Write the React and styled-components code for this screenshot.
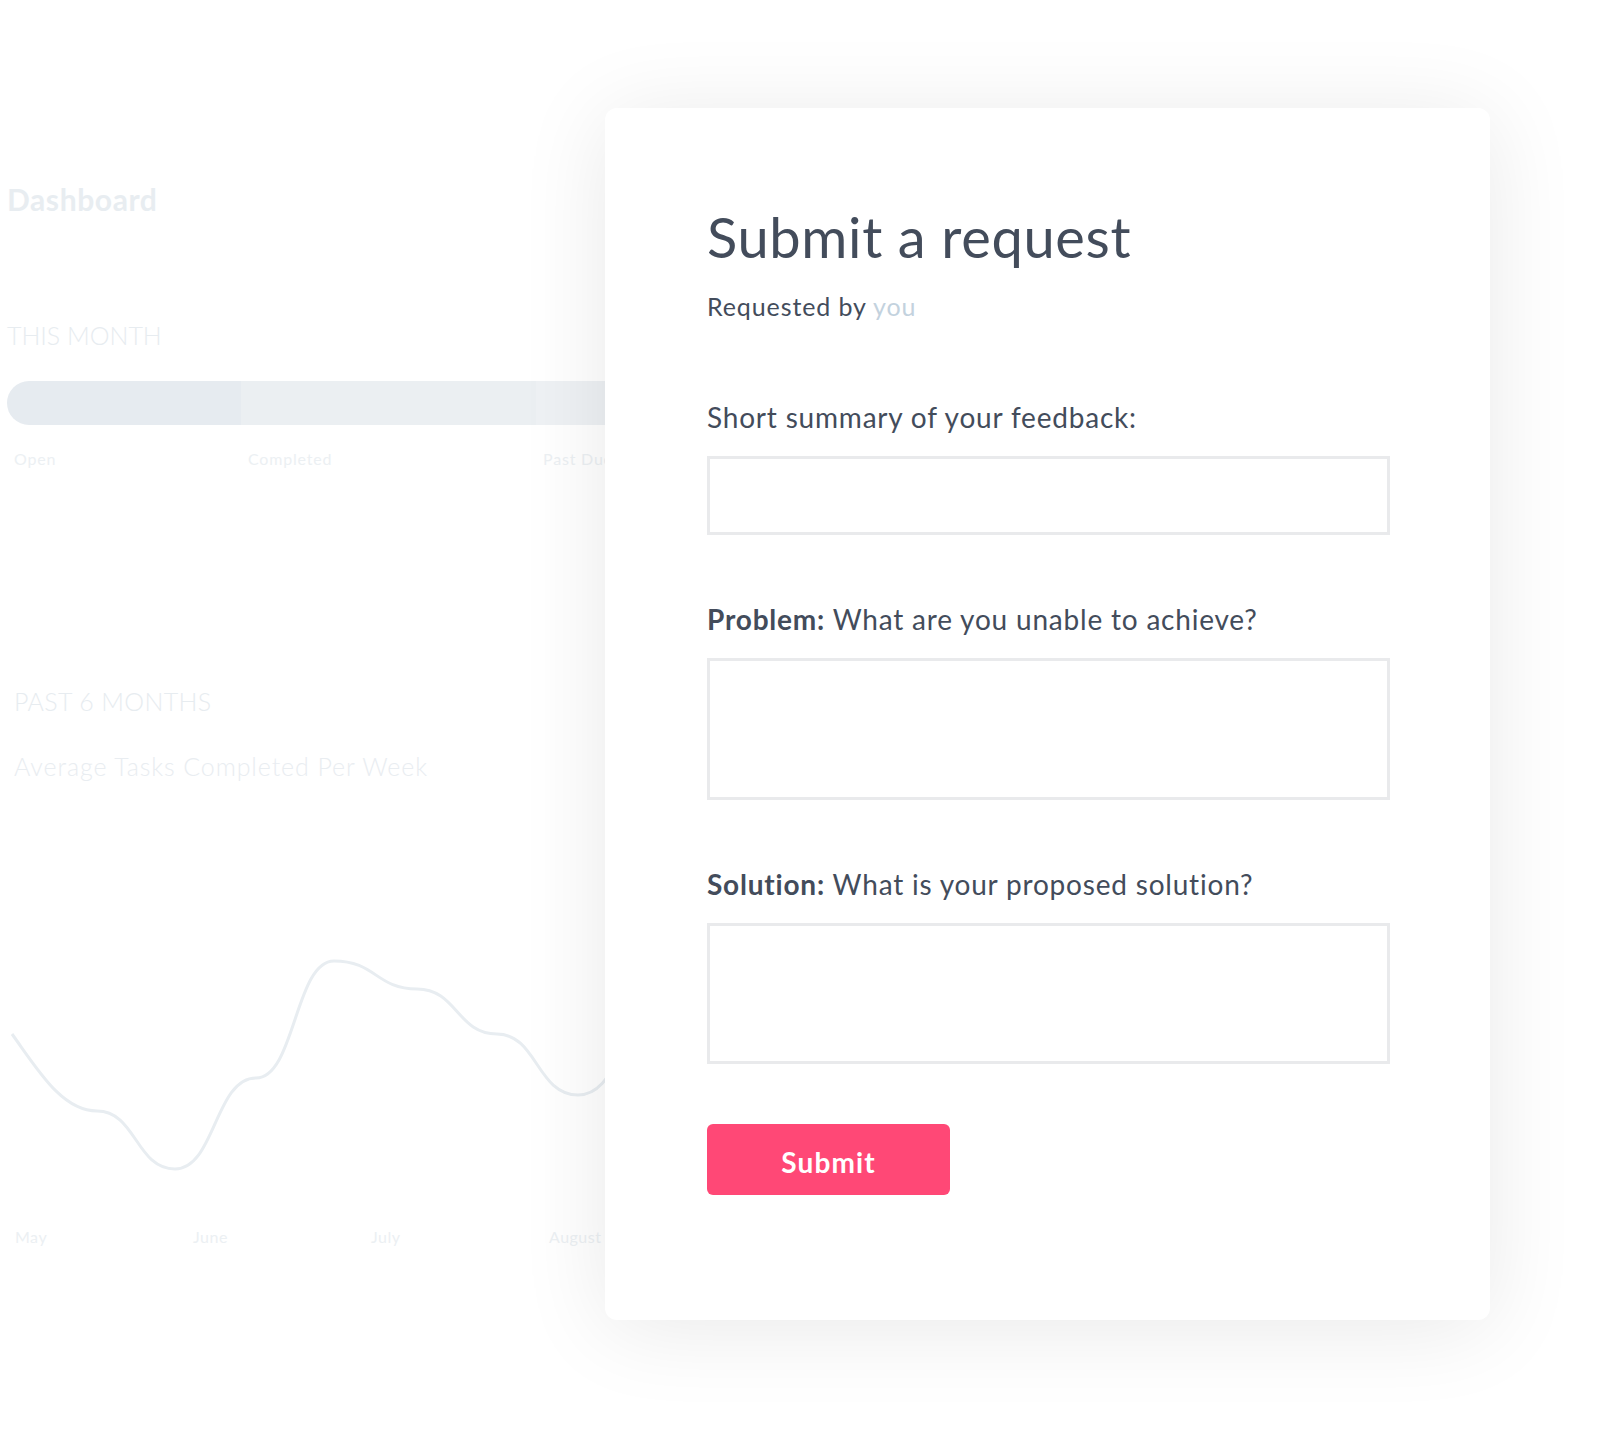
import React from "react";
import styled, { createGlobalStyle } from "styled-components";

const Global = createGlobalStyle`
  html, body { margin: 0; padding: 0; background: #ffffff; }
  body { font-family: Lato, "Open Sans", sans-serif; }
  * { box-sizing: border-box; }
`;

const Page = styled.div`
  position: relative;
  width: 1600px;
  height: 1430px;
  overflow: hidden;
  background: #ffffff;
`;

const Dashboard = styled.section`
  display: flex;
  flex-direction: column;
  padding: 181px 0 0 7px;
  width: 640px;
  color: #e8edf1;
`;

const DashTitle = styled.h1`
  margin: 0;
  font-size: 30px;
  line-height: 36px;
  font-weight: 700;
  letter-spacing: 0.6px;
  color: #e8edf1;
`;

const SectionLabel = styled.h2`
  margin: ${(p) => p.$top}px 0 0 ${(p) => p.$indent || 0}px;
  font-size: 25px;
  line-height: 30px;
  font-weight: 300;
  letter-spacing: ${(p) => p.$spacing || 0}px;
  color: #e7ecf0;
`;

const SubLabel = styled.div`
  margin: 35px 0 0 7px;
  font-size: 25px;
  line-height: 30px;
  font-weight: 300;
  letter-spacing: 0.9px;
  color: #e9edf1;
`;

const Bar = styled.div`
  margin-top: 31px;
  display: grid;
  grid-template-columns: 234px 295px 1fr;
  height: 44px;
  width: 640px;
  border-radius: 22px 0 0 22px;
  overflow: hidden;
`;

const Segment = styled.div`
  background: ${(p) => p.$color};
`;

const BarLabels = styled.div`
  margin-top: 24px;
  display: grid;
  grid-template-columns: 234px 295px 1fr;
`;

const SmallLabel = styled.span`
  padding-left: 7px;
  font-size: 16px;
  line-height: 20px;
  font-weight: 400;
  letter-spacing: 0.8px;
  color: #ecf0f3;
`;

const Chart = styled.svg`
  display: block;
  margin: 149px 0 0 -7px;
`;

const Months = styled.div`
  margin: 37px 0 0 8px;
  display: grid;
  grid-template-columns: repeat(4, 178px);
`;

const MonthLabel = styled.span`
  font-size: 16px;
  line-height: 20px;
  letter-spacing: 0.5px;
  color: #ecf0f3;
`;

const Card = styled.section`
  position: absolute;
  left: 605px;
  top: 108px;
  width: 885px;
  height: 1212px;
  padding: 97px 100px 0 102px;
  background: #ffffff;
  border-radius: 12px;
  box-shadow: 0 8px 90px rgba(0, 0, 0, 0.09);
  display: flex;
  flex-direction: column;
  color: #434c5b;
`;

const Title = styled.h1`
  margin: 0;
  font-size: 56px;
  line-height: 64px;
  font-weight: 400;
  letter-spacing: 0.65px;
  color: #434c5b;
`;

const Requested = styled.p`
  margin: 22px 0 0;
  font-size: 25px;
  line-height: 30px;
  letter-spacing: 0.9px;
  color: #434c5b;
`;

const Muted = styled.span`
  color: #c3d2de;
`;

const Field = styled.label`
  display: flex;
  flex-direction: column;
  margin-top: ${(p) => p.$top}px;
`;

const FieldLabel = styled.span`
  font-size: 28px;
  line-height: 34px;
  letter-spacing: 0.8px;
  color: #434c5b;
  strong { font-weight: 700; }
`;

const TextBox = styled.textarea`
  margin-top: 22px;
  width: 100%;
  height: ${(p) => p.$h}px;
  border: 3px solid #e9eaec;
  border-radius: 0;
  background: #fff;
  resize: none;
  outline: none;
  font: inherit;
`;

const Button = styled.button`
  margin-top: 60px;
  width: 243px;
  height: 71px;
  padding-top: 5px;
  border: none;
  border-radius: 6px;
  background: #ff4876;
  color: #ffffff;
  font-family: Lato, sans-serif;
  font-size: 28px;
  font-weight: 700;
  letter-spacing: 1.1px;
  cursor: pointer;
`;

const linePath =
  "M12,104 C38,140 62,181 97,181 C136,181 136,239 175,239 C215,239 215,148 256,148 C295,148 295,31 334,31 C376,31 376,59 417,59 C457,59 457,104 497,104 C537,104 537,165 578,165 C619,165 619,90 660,90";

export default function App() {
  return (
    <Page>
      <Global />
      <Dashboard>
        <DashTitle>Dashboard</DashTitle>
        <SectionLabel $top={103}>THIS MONTH</SectionLabel>
        <Bar>
          <Segment $color="#e6ebf0" />
          <Segment $color="#ebeff2" />
          <Segment $color="#eef1f4" />
        </Bar>
        <BarLabels>
          <SmallLabel>Open</SmallLabel>
          <SmallLabel>Completed</SmallLabel>
          <SmallLabel>Past Due</SmallLabel>
        </BarLabels>
        <SectionLabel $top={217} $indent={7} $spacing={0.35}>PAST 6 MONTHS</SectionLabel>
        <SubLabel>Average Tasks Completed Per Week</SubLabel>
        <Chart width="640" height="260" viewBox="0 0 640 260">
          <path d={linePath} fill="none" stroke="#e8edf1" strokeWidth="3" strokeLinecap="butt" />
        </Chart>
        <Months>
          <MonthLabel>May</MonthLabel>
          <MonthLabel>June</MonthLabel>
          <MonthLabel>July</MonthLabel>
          <MonthLabel>August</MonthLabel>
        </Months>
      </Dashboard>

      <Card>
        <Title>Submit a request</Title>
        <Requested>
          Requested by <Muted>you</Muted>
        </Requested>
        <Field $top={79}>
          <FieldLabel>Short summary of your feedback:</FieldLabel>
          <TextBox $h={79} rows={1} />
        </Field>
        <Field $top={67}>
          <FieldLabel>
            <strong>Problem:</strong> What are you unable to achieve?
          </FieldLabel>
          <TextBox $h={142} />
        </Field>
        <Field $top={67}>
          <FieldLabel>
            <strong>Solution:</strong> What is your proposed solution?
          </FieldLabel>
          <TextBox $h={141} />
        </Field>
        <Button type="button">Submit</Button>
      </Card>
    </Page>
  );
}
